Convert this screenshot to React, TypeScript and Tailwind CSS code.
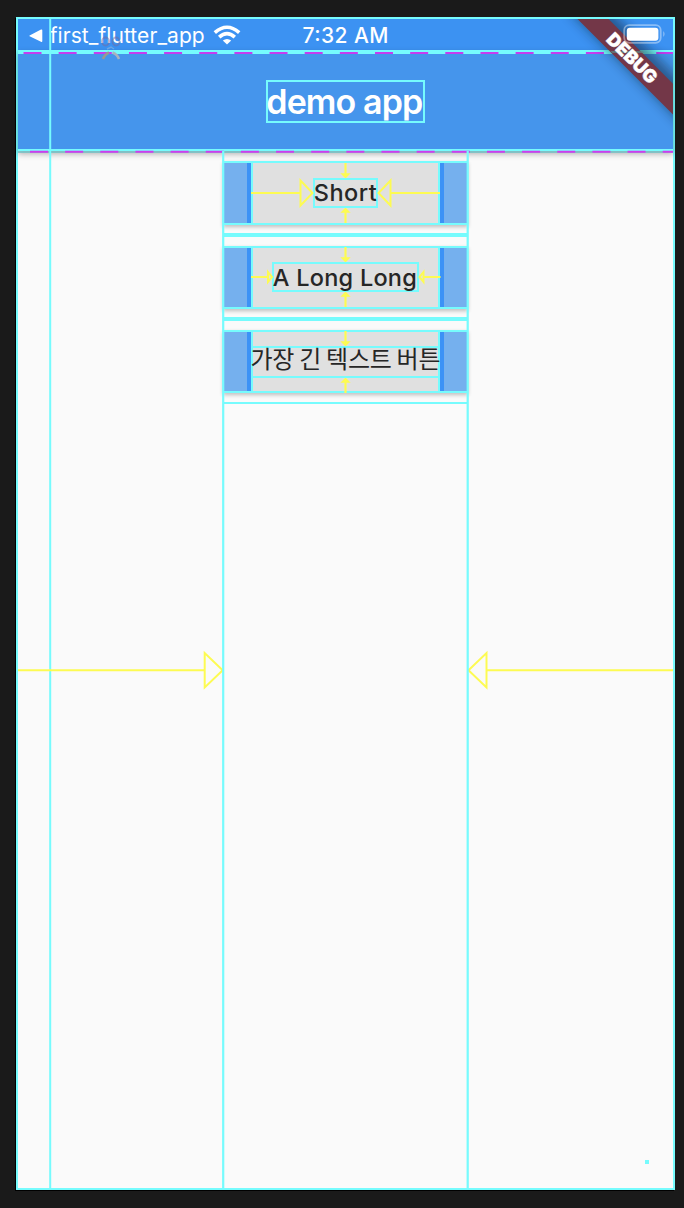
import React from "react";

const CYAN = "#76fbfd";
const YELLOW = "#fdfb52";

function VerticalArrow({ up = false, className = "" }: { up?: boolean; className?: string }) {
  return (
    <svg width="11" height="15" viewBox="0.5 0 11 15" className={`shrink-0 ${className}`}>
      <g transform={up ? "rotate(180 6 7.5)" : undefined}>
        <path d="M6 0V12" stroke={YELLOW} strokeWidth="2.2" />
        <path d="M0.8 10.3H11.2L6 15.5Z" fill={YELLOW} />
      </g>
    </svg>
  );
}

function SideArrow({ span, head, half, flip = false }: { span: number; head: number; half: number; flip?: boolean }) {
  return (
    <svg width={span} height="38" viewBox={`0 0 ${span} 38`} className="shrink-0 overflow-visible">
      <g transform={flip ? `translate(${span} 0) scale(-1 1)` : undefined} fill="none" stroke={YELLOW} strokeWidth="2">
        <path d={`M0 19H${span - head}`} />
        <path d={`M${span - head} ${19 - half}V${19 + half}L${span - 0.5} 19Z`} />
      </g>
    </svg>
  );
}

function DemoButton({
  children,
  arrows,
  compact = false,
}: {
  children: React.ReactNode;
  arrows?: React.ReactNode;
  compact?: boolean;
}) {
  return (
    <div
      className={`relative flex w-full border-y-2 border-[#76fbfd] bg-[#e0e0e0] shadow-[0_2px_4px_rgba(0,0,0,0.24)] ${
        compact ? "h-[63px]" : "h-16"
      }`}
    >
      <div className="w-6 shrink-0 bg-[#75b0ee]" />
      <div className="w-1 shrink-0 bg-[#3c92f6]" />
      <div className="flex w-[189px] shrink-0 flex-col items-center border-x-2 border-[#76fbfd]">
        <VerticalArrow className={compact ? "-mt-px" : ""} />
        {children}
        <VerticalArrow up />
      </div>
      <div className="w-1 shrink-0 bg-[#3c92f6]" />
      <div className="min-w-0 flex-1 bg-[#75b0ee]" />
      {arrows}
    </div>
  );
}

function StatusBar() {
  return (
    <div className="flex h-[31px] items-center bg-[#3c92f2] text-white">
      <svg width="14" height="14" viewBox="0 0 14 14" className="ml-[11px] mt-0.5 shrink-0">
        <path d="M.6 6.4L12 .6Q13.3 0 13.3 1.3V12Q13.3 13.4 12 12.7L.6 7.3Q0 6.9.6 6.4Z" fill="white" />
      </svg>
      <svg width="155" height="31" className="ml-[7px] shrink-0 overflow-visible">
        <text x="-0.3" y="24" textLength="155" fill="white" className="font-['Inter'] text-[21px]">first_flutter_app</text>
      </svg>
      <svg width="28" height="20" viewBox="0 0 28 20" className="ml-[8px] shrink-0">
        <g fill="none" stroke="white" strokeWidth="3.6">
          <path d="M1.8 7.6Q14 -3.1 26.2 7.6" />
          <path d="M6.2 12.2Q14 5.2 21.8 12.2" />
        </g>
        <path d="M9.8 15.5Q14 12.3 18.2 15.5L14 19.6Z" fill="white" />
      </svg>
      <svg width="85" height="31" className="ml-[62px] shrink-0 overflow-visible">
        <text x="-0.5" y="24" textLength="86" fill="white" className="font-['Inter'] text-[21px] font-medium">7:32 AM</text>
      </svg>
    </div>
  );
}

function DebugRibbon() {
  return (
    <svg width="655" height="132" viewBox="18 19 655 132" className="pointer-events-none absolute left-0 top-0">
      <defs>
        <filter id="ribbonShadow" x="-30%" y="-30%" width="160%" height="160%">
          <feGaussianBlur stdDeviation="6" />
        </filter>
      </defs>
      <path d="M568 10L610 10L685 85V127Z" fill="#123" opacity=".5" filter="url(#ribbonShadow)" />
      <path d="M577.5 19H608.5L673 83.7V114.5Z" fill="#733748" />
      <path d="M610.5 51H642.5L644.5 53H612.5Z" fill="#5c8a86" opacity=".7" />
      <text
        transform="translate(632.2 58) rotate(45)"
        y="6.6"
        textAnchor="middle"
        textLength="63"
        fill="white"
        stroke="white"
        strokeWidth=".4"
        className="font-['Inter'] text-[18px] font-black"
      >
        DEBUG
      </text>
      <rect x="624.2" y="25.2" width="36.5" height="17.6" rx="5" fill="none" stroke="white" strokeOpacity=".4" strokeWidth="1.8" />
      <rect x="626.8" y="27.7" width="31.6" height="13" rx="3" fill="white" />
      <path d="M663.3 31Q665.8 34 663.3 37Z" fill="white" opacity=".45" />
    </svg>
  );
}

function LayoutGuides() {
  return (
    <svg width="655" height="1169" viewBox="18 19 655 1169" className="pointer-events-none absolute left-0 top-0">
      <path d="M18 52H673" stroke={CYAN} strokeWidth="4" />
      <path d="M18 150H673" stroke={CYAN} strokeWidth="2" />
      <path d="M18 152H673" stroke="#6cbfc6" strokeWidth="1.4" />
      <path d="M23.5 53H673" stroke="#c63cf0" strokeWidth="2" strokeDasharray="18 17.15" />
      <path d="M30 151.7H673" stroke="#d03cee" strokeWidth="2" strokeDasharray="18 17.15" />
      <path d="M50.2 19V1188" stroke={CYAN} strokeWidth="2" />
      <path
        d="M18 670.2H204.7M204.7 653V687.5L222.7 670.2ZM673 670.2H486.5M486.5 653V687.5L468.5 670.2Z"
        stroke={YELLOW}
        strokeWidth="2"
        fill="none"
      />
      <path d="M223.2 151V1188M467.7 151V1188" stroke={CYAN} strokeWidth="2.2" />
      <rect x="645" y="1160" width="4" height="4" fill={CYAN} />
      <g fill="none">
        <ellipse cx="105.5" cy="41.5" rx="3.5" ry="4" stroke="#75679c" strokeWidth="1.8" opacity=".5" />
        <ellipse cx="116" cy="41.5" rx="3.5" ry="4" stroke="#75679c" strokeWidth="1.8" opacity=".5" />
        <path d="M103 59Q104.5 54.5 109 52.5" stroke="#9c9890" strokeWidth="2.5" />
        <path d="M112.5 52.5Q117.5 54.5 119 59" stroke="#a9b2bf" strokeWidth="2.5" />
        <path d="M107 49L111 47L114 49" stroke="#8cb4e0" strokeWidth="1.5" opacity=".6" />
      </g>
    </svg>
  );
}

export default function App() {
  return (
    <div className="h-[1208px] w-[684px] overflow-hidden bg-[#1a1a1a] pl-4 pt-[17px] font-['Inter']">
      <div className="relative h-[1173px] w-[659px] border-2 border-[#76fbfd] bg-[#fafafa] shadow-[-1px_1px_0_#000]">
        <StatusBar />
        <div className="flex h-[101px] justify-center bg-[#4595ec] pt-[30px] shadow-[0_3px_6px_rgba(0,0,0,0.3)]">
          <div className="h-[43px] w-[159px] border-2 border-[#76fbfd]">
            <svg width="155" height="39" className="overflow-visible">
              <text x="-1.7" y="32" textLength="157" fill="white" className="font-['Inter'] text-[34px] font-semibold">demo app</text>
            </svg>
          </div>
        </div>
        <div className="ml-[205px] flex w-[245px] flex-col">
          <div className="flex h-[84px] flex-col border-b-2 border-[#76fbfd] pt-[10px]">
            <DemoButton
              arrows={
                <div className="absolute inset-x-[28px] top-[11px] flex justify-between">
                  <SideArrow span={62} head={12.5} half={12.5} />
                  <SideArrow span={62} head={12.5} half={12.5} flip />
                </div>
              }
            >
              <div className="h-[30px] w-[65px] shrink-0 border-2 border-[#76fbfd]">
                <svg width="61" height="26" className="block overflow-visible">
                  <text x="-1.2" y="21" textLength="63" fill="#262626" className="font-['Inter'] text-[23.5px] font-medium">Short</text>
                </svg>
              </div>
            </DemoButton>
          </div>
          <div className="flex h-[84px] flex-col border-y-2 border-[#76fbfd] pt-[9px]">
            <DemoButton
              compact
              arrows={
                <div className="absolute inset-x-[28px] top-[10px] flex justify-between">
                  <SideArrow span={21.5} head={4.5} half={5} />
                  <SideArrow span={21.5} head={4.5} half={5} flip />
                </div>
              }
            >
              <div className="h-[30px] w-[147px] shrink-0 border-2 border-[#76fbfd]">
                <svg width="143" height="26" className="block overflow-visible">
                  <text x="-1.2" y="21.6" textLength="144" fill="#262626" className="font-['Inter'] text-[23.5px] font-medium">A Long Long</text>
                </svg>
              </div>
            </DemoButton>
          </div>
          <div className="flex h-[85px] flex-col border-y-2 border-[#76fbfd] pt-[9px]">
            <DemoButton compact>
              <div className="h-8 w-full shrink-0 border-y-2 border-[#76fbfd]">
                <svg width="185" height="28" className="block overflow-visible">
                  <text x="-2.5" y="20" textLength="190" fill="#262626" className="font-['Noto_Sans_CJK_KR',sans-serif] text-[24px]">가장 긴 텍스트 버튼</text>
                </svg>
              </div>
            </DemoButton>
          </div>
        </div>
        <LayoutGuides />
        <DebugRibbon />
      </div>
    </div>
  );
}
